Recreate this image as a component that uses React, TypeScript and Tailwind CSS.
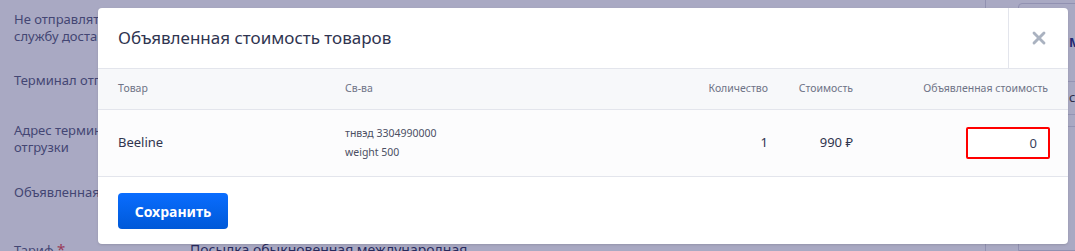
import { X } from "lucide-react";

const font = { fontFamily: '"Noto Sans", "Open Sans", sans-serif' };

function PageBehind() {
  return (
    <div className="flex h-[251px] w-full">
      <div className="relative w-[985px] shrink-0 pl-[14px] text-[13px] leading-[17px] text-[#565a7a]">
        <div className="pt-[11px]">
          <div>Не отправлять в</div>
          <div>службу доставки</div>
        </div>
        <div className="pt-[27px]">Терминал отгрузки</div>
        <div className="pt-[33px]">
          <div>Адрес терминала</div>
          <div>отгрузки</div>
        </div>
        <div className="pt-[28px]">Объявленная стоимость</div>
        <div className="flex pt-[40px]">
          <div className="w-[176px]">
            Тариф <span className="text-[15px] text-[#e5484d]">*</span>
          </div>
          <div className="text-[14px] text-[#2b2d55]">Посылка обыкновенная международная</div>
        </div>
      </div>
      <div className="flex-1 border-l border-[#d7d7e2] pl-[32px] pt-[3px]">
        <div className="h-full rounded-t-[4px] border border-[#d7d7e2] bg-white">
          <div className="flex h-[77px] items-center pl-[50px] text-[13px] font-bold text-[#232a78]">Мои</div>
          <div className="flex h-[33px] items-center border-t border-[#dcdce6] pl-[50px] text-[13px] text-[#333]">с</div>
          <div className="h-[12px] border-t border-[#dcdce6]" />
          <div className="border-t border-[#dcdce6]" />
        </div>
      </div>
    </div>
  );
}

export default function App() {
  return (
    <div className="relative h-[251px] w-full overflow-hidden bg-white" style={font}>
      <PageBehind />
      <div className="absolute inset-0 bg-[#28286a]/40" />

      <div className="absolute left-[98px] top-[8px] w-[970px] overflow-hidden rounded-[4px] bg-white shadow-sm">
        <div className="flex h-[61px] border-b border-[#e3e5ec]">
          <h2 className="flex flex-1 items-center pl-[20px] text-[17px] font-normal text-[#2f3450]">
            Объявленная стоимость товаров
          </h2>
          <button className="flex w-[60px] items-center justify-center border-l border-[#e3e5ec] text-[#aab2c0]">
            <X size={20} strokeWidth={3.4} />
          </button>
        </div>

        <div className="flex h-[41px] items-center border-b border-[#e3e5ec] bg-[#f7f8fa] text-[10.5px] text-[#6e7386]">
          <div className="w-[247px] pl-[20px]">Товар</div>
          <div className="flex-1">Св-ва</div>
          <div className="w-[120px] text-right">Количество</div>
          <div className="w-[85px] text-right">Стоимость</div>
          <div className="w-[215px] pr-[20px] text-right">Объявленная стоимость</div>
        </div>

        <div className="flex h-[67px] items-center border-b border-[#e3e5ec] bg-[#fcfcfd] text-[13px] text-[#30354f]">
          <div className="w-[247px] pl-[20px]">Beeline</div>
          <div className="flex-1 text-[10.5px] leading-[19px] text-[#4b4f63]">
            <div>тнвэд 3304990000</div>
            <div>weight 500</div>
          </div>
          <div className="w-[120px] text-right">1</div>
          <div className="w-[85px] text-right">990 ₽</div>
          <div className="flex w-[215px] justify-end pr-[18px]">
            <input
              readOnly
              value="0"
              className="h-[32px] w-[84px] rounded-[2px] border-[2.5px] border-[#ff0000] bg-white pr-[11px] text-right text-[13px] text-[#3a3f5c] outline-none"
              style={font}
            />
          </div>
        </div>

        <div className="px-[20px] pb-[15px] pt-[16px]">
          <button className="h-[36px] w-[110px] rounded-[4px] bg-gradient-to-b from-[#0a6dff] to-[#0059d8] text-[14px] font-bold text-white">
            Сохранить
          </button>
        </div>
      </div>
    </div>
  );
}
